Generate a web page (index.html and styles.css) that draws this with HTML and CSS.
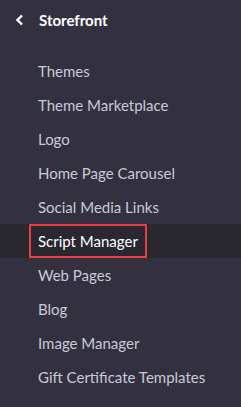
FILE: index.html
```html
<!DOCTYPE html>
<html lang="en">
<head>
    <meta charset="UTF-8">
    <title>Storefront</title>
    <link rel="stylesheet" href="styles.css">
</head>
<body>
    <nav class="side-menu">
        <div class="menu-header">
            <svg class="back-icon" width="10" height="12" viewBox="0 0 10 12">
                <path d="M7 1.5 L2.5 6 L7 10.5" fill="none" stroke="#ffffff" stroke-width="2.4"/>
            </svg>
            <span class="menu-title">Storefront</span>
        </div>
        <ul class="menu-list">
            <li class="menu-item">Themes</li>
            <li class="menu-item">Theme Marketplace</li>
            <li class="menu-item">Logo</li>
            <li class="menu-item">Home Page Carousel</li>
            <li class="menu-item">Social Media Links</li>
            <li class="menu-item active"><span class="highlight">Script Manager</span></li>
            <li class="menu-item">Web Pages</li>
            <li class="menu-item">Blog</li>
            <li class="menu-item">Image Manager</li>
            <li class="menu-item">Gift Certificate Templates</li>
        </ul>
    </nav>
</body>
</html>
```

FILE: styles.css
```css
body {
    margin: 0;
    padding: 0;
    background-color: #33313f;
    font-family: Lato, "Noto Sans", sans-serif;
}

.side-menu {
    width: 241px;
    height: 407px;
}

.menu-header {
    display: flex;
    align-items: center;
    height: 40px;
    padding-left: 15px;
}

.back-icon {
    margin-right: 14px;
}

.menu-title {
    color: #ffffff;
    font-size: 15px;
    font-weight: bold;
}

.menu-list {
    list-style: none;
    margin: 0;
    padding: 14px 0 0 0;
}

.menu-item {
    height: 34px;
    line-height: 34px;
    padding-left: 38px;
    color: #c8cad8;
    font-size: 15px;
}

.menu-item.active {
    background-color: #29272f;
    color: #ffffff;
}

.highlight {
    display: inline-block;
    margin-left: -9px;
    padding: 0 7px 0 7px;
    height: 30px;
    line-height: 30px;
    border: 2px solid #ea3d42;
    vertical-align: top;
}
```
